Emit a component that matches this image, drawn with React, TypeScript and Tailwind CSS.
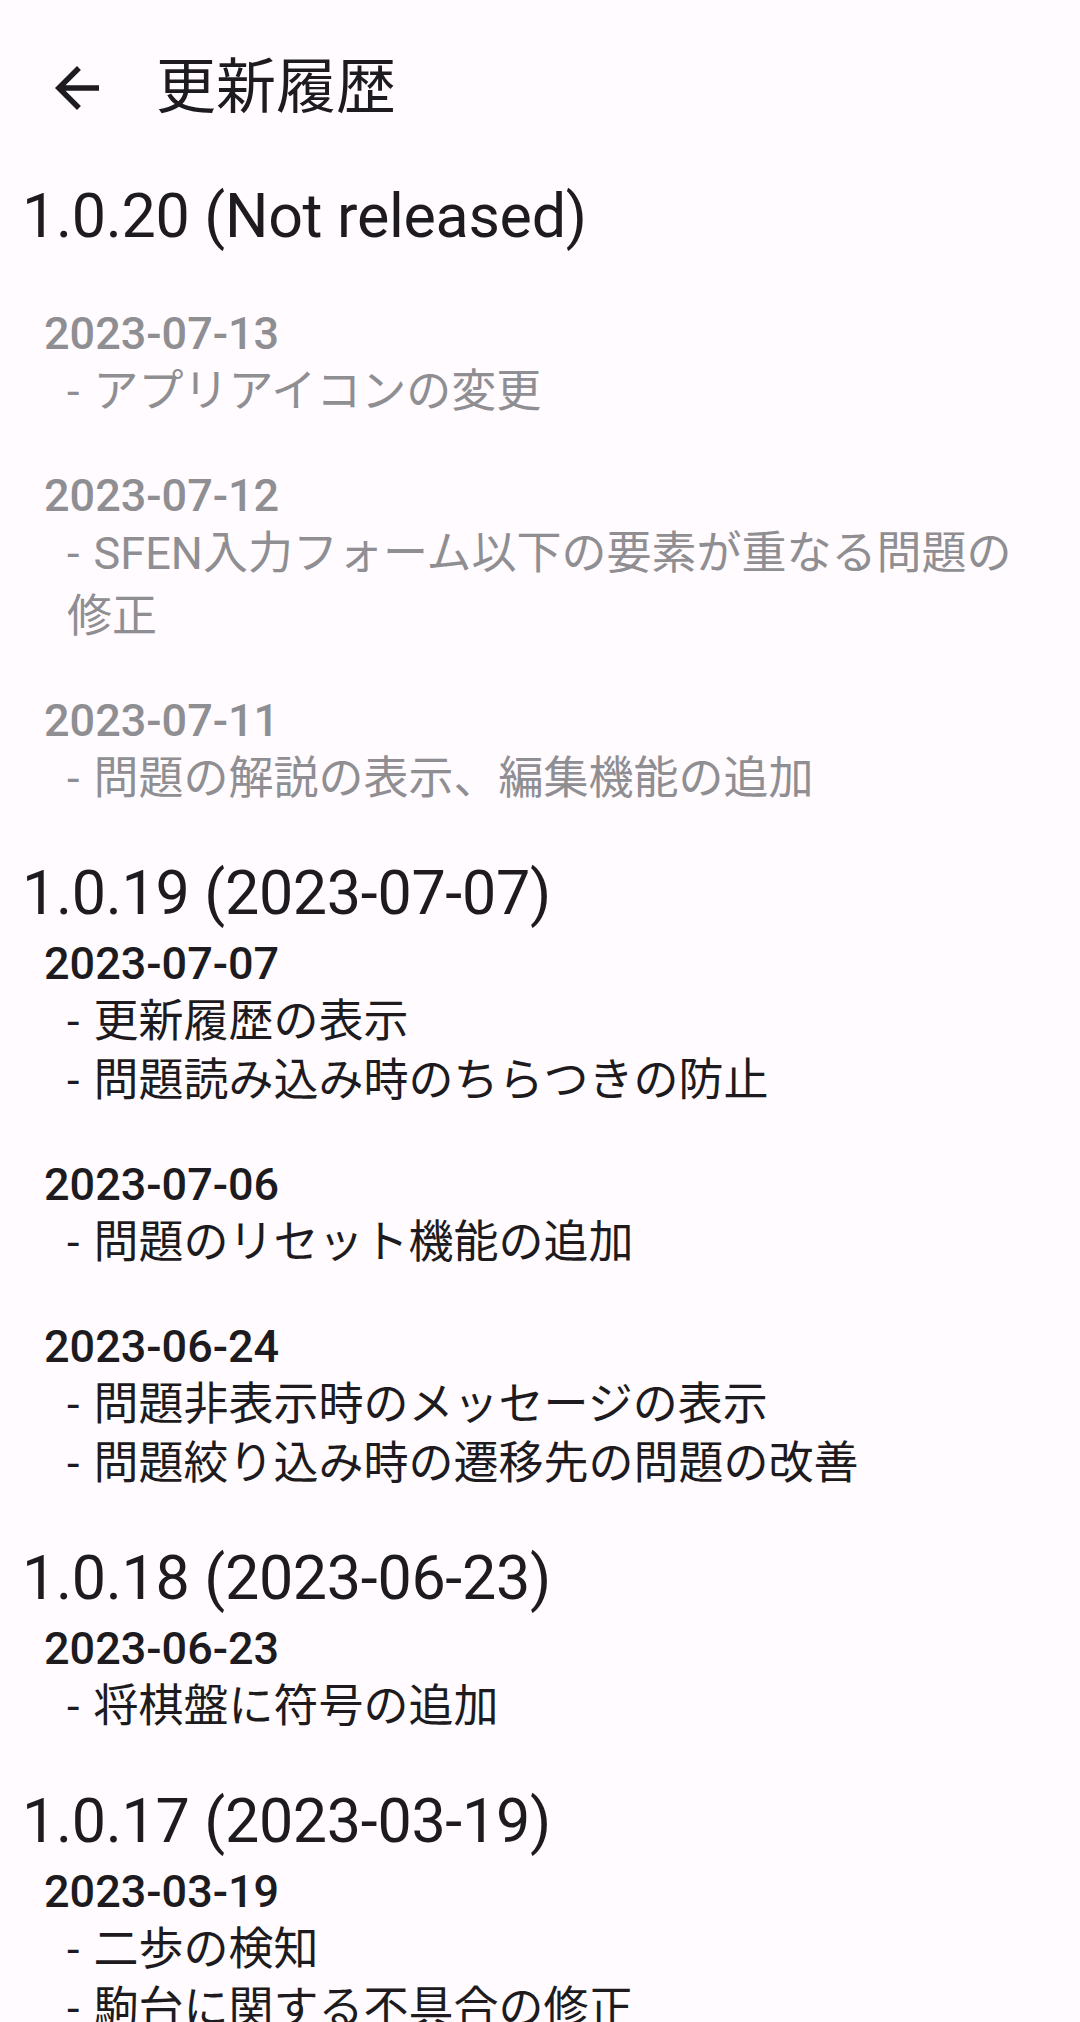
type Entry = { date: string; items: string[] };
type Release = { title: string; released: boolean; entries: Entry[] };

const releases: Release[] = [
  {
    title: "1.0.20 (Not released)",
    released: false,
    entries: [
      { date: "2023-07-13", items: ["アプリアイコンの変更"] },
      { date: "2023-07-12", items: ["SFEN入力フォーム以下の要素が重なる問題の修正"] },
      { date: "2023-07-11", items: ["問題の解説の表示、編集機能の追加"] },
    ],
  },
  {
    title: "1.0.19 (2023-07-07)",
    released: true,
    entries: [
      { date: "2023-07-07", items: ["更新履歴の表示", "問題読み込み時のちらつきの防止"] },
      { date: "2023-07-06", items: ["問題のリセット機能の追加"] },
      { date: "2023-06-24", items: ["問題非表示時のメッセージの表示", "問題絞り込み時の遷移先の問題の改善"] },
    ],
  },
  {
    title: "1.0.18 (2023-06-23)",
    released: true,
    entries: [{ date: "2023-06-23", items: ["将棋盤に符号の追加"] }],
  },
  {
    title: "1.0.17 (2023-03-19)",
    released: true,
    entries: [{ date: "2023-03-19", items: ["二歩の検知", "駒台に関する不具合の修正"] }],
  },
];

export default function App() {
  return (
    <div
      className="w-[1080px] h-[2022px] overflow-hidden bg-[#fffbfe] text-[#1d1b20]"
      style={{ fontFamily: 'Roboto, "Noto Sans CJK JP", sans-serif' }}
    >
      {/* top bar */}
      <div className="h-[176px] flex items-center pl-[44px]">
        <svg viewBox="0 0 24 24" className="w-[66px] h-[66px] fill-[#1d1b20]">
          <path d="M20 11H7.83l5.59-5.59L12 4l-8 8 8 8 1.41-1.41L7.83 13H20v-2z" />
        </svg>
        <h1 className="ml-[46px] text-[60px] leading-[72px] font-normal">更新履歴</h1>
      </div>

      <div className="pt-[4px] px-[22px] flex flex-col gap-[49px]">
        {releases.map((release) => (
          <section key={release.title}>
            <h2 className="text-[61px] leading-[72px] font-normal tracking-[-0.3px]">
              {release.title}
            </h2>
            <div
              className={`flex flex-col gap-[47px] ${
                release.released ? "mt-[7px]" : "mt-[54px] text-[#8f8e92]"
              }`}
            >
              {release.entries.map((entry) => (
                <div key={entry.date} className="flex flex-col">
                  <div className="pl-[22px] text-[45px] leading-[56px] font-medium">
                    {entry.date}
                  </div>
                  <div className="flex flex-col">
                    {entry.items.map((item) => (
                      <p
                        key={item}
                        className="pl-[45px] pr-[20px] text-[45px] leading-[63px] -my-[2px] [word-spacing:3px]"
                      >
                        - {item}
                      </p>
                    ))}
                  </div>
                </div>
              ))}
            </div>
          </section>
        ))}
      </div>
    </div>
  );
}
